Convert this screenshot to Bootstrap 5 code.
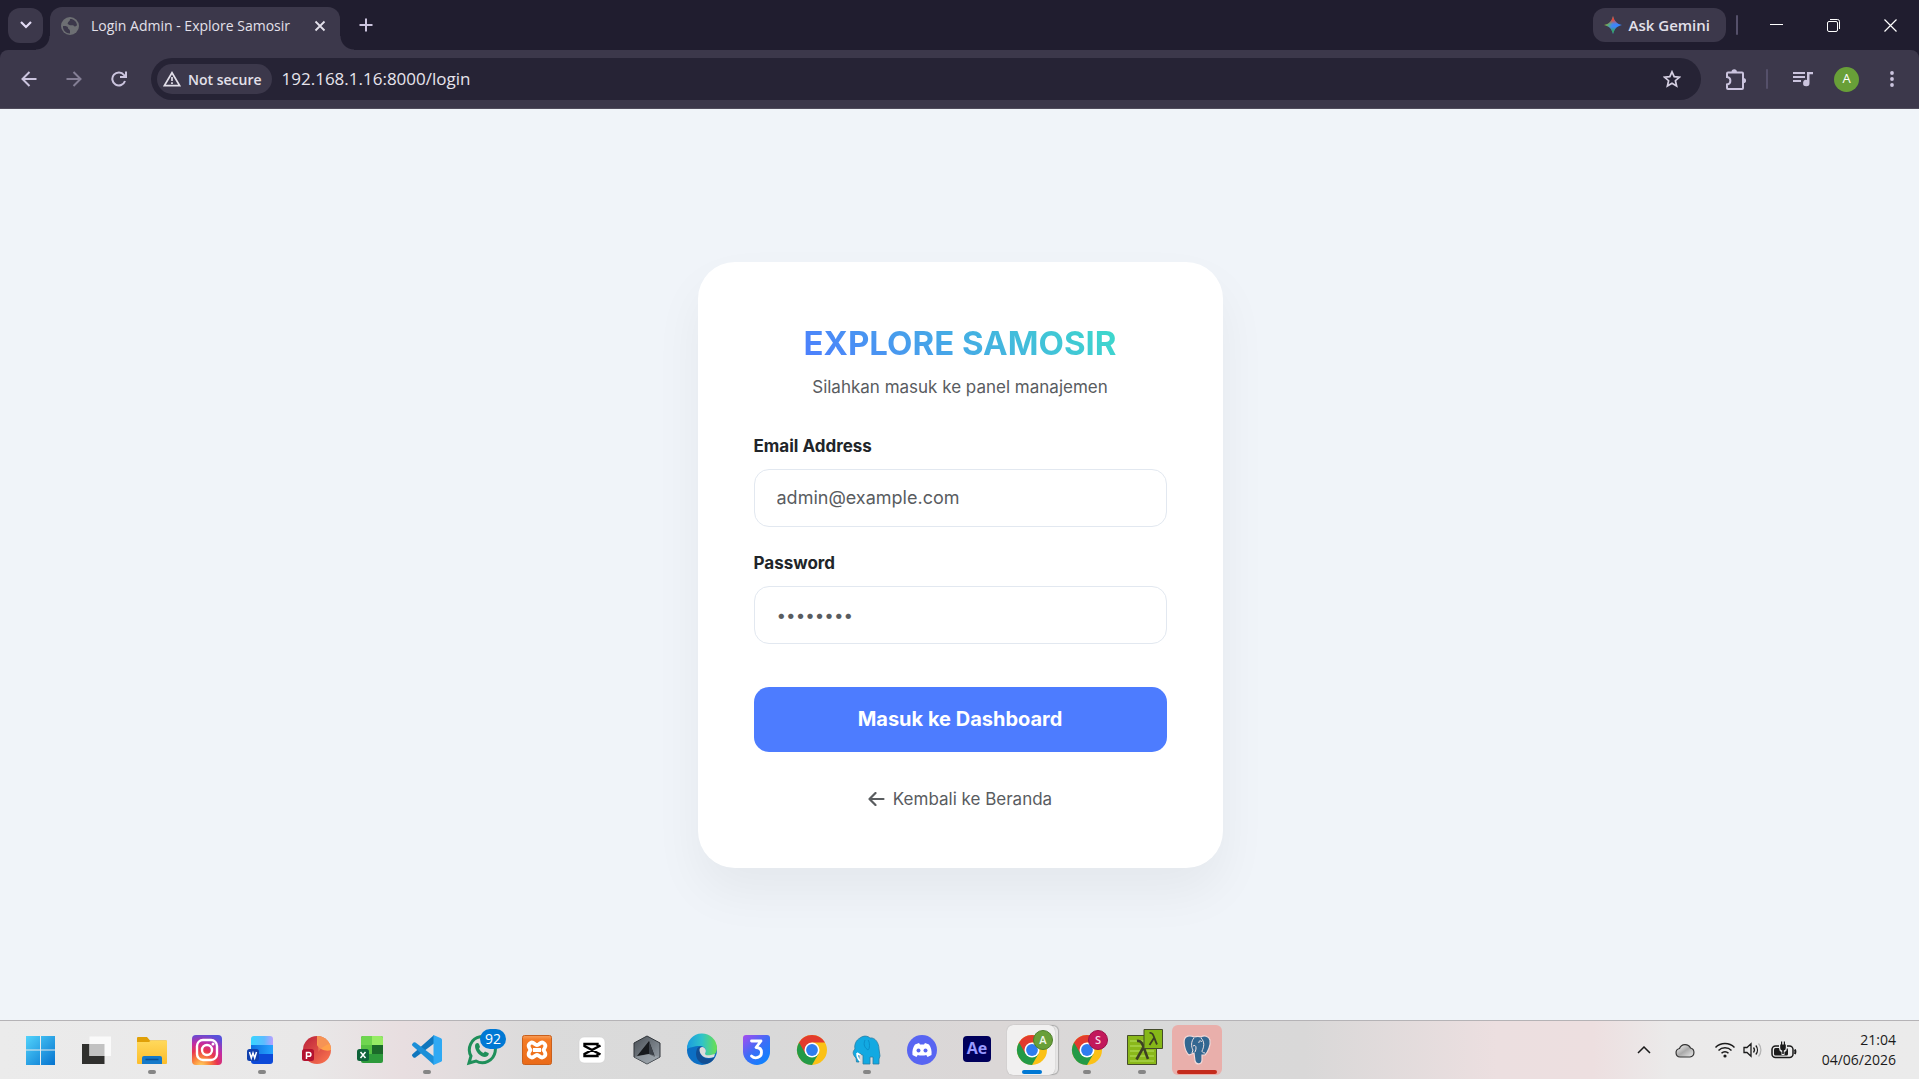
<!DOCTYPE html>
<html lang="id">
<head>
<meta charset="utf-8">
<meta name="viewport" content="width=device-width, initial-scale=1">
<title>Login Admin - Explore Samosir</title>
<link href="https://cdn.jsdelivr.net/npm/bootstrap@5.3.0/dist/css/bootstrap.min.css" rel="stylesheet">
<style>
  :root { --frame: #201d2f; --bar: #3c384b; --field: #262335; --ink: #cbc4de; --soft: #e3e0ea; }
  body { font-family: "Open Sans", "Noto Sans", sans-serif; background: #f0f4f9; }
  svg { display: block; flex: none; }
  .plain { border: 0; background: none; padding: 0; display: flex; align-items: center; justify-content: center; }

  /* window frame */
  .tab-strip { height: 50px; background: var(--frame); padding-left: 8px; }
  .tab-search { width: 35px; height: 35px; border-radius: 12px; background: var(--bar); }
  .site-tab { position: relative; width: 290px; height: 43px; margin-left: 7px; padding: 0 13px 6px 11px; background: var(--bar); border-radius: 12px 12px 0 0; color: var(--soft); font-size: 14px; }
  .site-tab::before, .site-tab::after { content: ""; position: absolute; bottom: 0; width: 14px; height: 14px; }
  .site-tab::before { right: 100%; background: radial-gradient(circle at 0 0, transparent 13px, var(--bar) 14px); }
  .site-tab::after { left: 100%; background: radial-gradient(circle at 100% 0, transparent 13px, var(--bar) 14px); }
  .new-tab { width: 35px; height: 35px; margin-left: 8px; }
  .gemini { height: 34px; padding: 0 16px 0 11px; gap: 7px; border-radius: 12px; background: var(--bar); color: var(--soft); font-size: 15px; font-weight: 600; }
  .rule { width: 2px; height: 20px; border-radius: 1px; background: #55506a; }
  .gemini + .rule { margin: 0 10px; }
  .win-btn { width: 57px; height: 50px; }

  .toolbar-wrap { background: var(--frame); }
  .toolbar { height: 59px; background: var(--bar); border-radius: 8px 8px 0 0; border-bottom: 1px solid #504c5c; padding: 0 5px 0 6px; }
  .tool { width: 45px; height: 42px; color: var(--ink); }
  .omnibox { height: 42px; margin: 0 12px 0 10px; padding: 0 20px 0 6px; border-radius: 21px; background: var(--field); }
  .chip { height: 30px; padding: 0 10px 0 6px; gap: 7px; border-radius: 15px; background: var(--bar); color: var(--soft); font-size: 14px; font-weight: 600; }
  .url { border: 0; outline: 0; background: none; color: #e6e4ec; font-size: 17px; margin-left: 10px; padding: 0; min-width: 0; }
  .avatar { width: 25px; height: 25px; border-radius: 50%; background: #689f38; color: #fff; font-size: 13px; margin: 0 10px 0 9px; }

  /* login page */
  main { padding-left: 1px; }
  .login-box { width: 100%; max-width: 525px; padding: 57px 56px 55px; background: #fff; border-radius: 37px; box-shadow: 0 25px 50px rgba(0, 0, 0, .05); font-family: Inter, "Open Sans", sans-serif; font-size: 17px; line-height: 30px; }
  .brand { width: max-content; margin: 0 auto 5px; font-size: 33px; line-height: 48px; font-weight: 700; background: linear-gradient(45deg, #4d7cff, #3ddcca); -webkit-background-clip: text; background-clip: text; color: transparent; }
  .hint { color: #595c5f; margin-bottom: 29px; }
  .field-label { display: block; font-weight: 700; color: #212529; margin-bottom: 8px; }
  .login-box .form-control { height: 58px; padding: 0 22px; border: 1px solid #e2e8f0; border-radius: 15px; font-size: 18px; }
  .login-box .form-control[type=password] { font-size: 17px; }
  .login-box .form-control::placeholder { color: #595c5f; }
  .field { margin-bottom: 21px; }
  .enter { height: 65px; margin-top: 43px; border: 0; border-radius: 15px; background: #4d7cff; font-size: 20px; font-weight: 700; }
  .home-link { height: 28px; margin-top: 33px; gap: 8px; color: #595c5f; text-decoration: none; }

  /* taskbar */
  .taskbar { height: 59px; border-top: 1px solid #b5b3b6; padding: 0 23px 0 27px; background: linear-gradient(90deg, #ebebeb 0, #e9e8e8 16%, #e8dee0 21%, #dbdbdb 28%, #d9d9d9 40%, #dbd7d7 52%, #d9d9d9 60%, #d9d8d8 68%, #ecdfe0 78%, #eddfe0 83%, #ebeaea 87%, #ebebeb 100%); }
  .apps { gap: 25px; }
  .app { position: relative; width: 30px; height: 30px; }
  .app > svg { position: relative; overflow: visible; }
  .running::after { content: ""; position: absolute; left: 11px; bottom: -9px; width: 8px; height: 4px; border-radius: 2px; background: #858585; }
  .current::before, .alert-app::before { content: ""; position: absolute; inset: -10px; border-radius: 6px; background: #f1f0f0; box-shadow: 0 0 1px #999; }
  .current::before { right: -8px; box-shadow: 0 0 1px #999, 4px 0 0 -1px #e6e5e5, 4px 0 1px #aaa; }
  .alert-app::before { background: #e9afab; box-shadow: none; }
  .current::after { left: 5px; width: 20px; background: #0078d4; }
  .alert-app::after { left: -5px; width: 40px; background: #c42b1c; }
  .count { position: absolute; left: 13px; top: -6px; width: 26px; height: 20px; border-radius: 10px; background: #0078d4; color: #fff; font-size: 14px; line-height: 20px; text-align: center; }
  .clock { font-size: 14px; line-height: 20px; color: #1b1b1b; margin-left: 25px; }
</style>
</head>
<body class="vh-100 d-flex flex-column overflow-hidden">

<header>
  <div class="tab-strip d-flex align-items-center">
    <button class="plain tab-search" aria-label="Cari tab"><svg width="12" height="8" viewBox="0 0 12 8" fill="none" stroke="#e3dcf5" stroke-width="2.2"><path d="M1 1l5 5 5-5"/></svg></button>
    <div class="site-tab d-flex align-items-center align-self-end">
      <svg width="18" height="18" viewBox="0 0 18 18"><circle cx="9" cy="9" r="9" fill="#6d6f73"/><path d="M2 9c2 0 5 0 5 2 0 1.500 2 1 2 3v2.500C5 16.500 1.500 13 2 9zM9 2c3-.5 6.500 2 7 6-1 2-3 1.500-3.500.5S10 9 8.500 8 6 7 7 5.500 9 4 9 2z" fill="#3c384b"/></svg>
      <span class="text-nowrap ms-2 ps-1 flex-grow-1">Login Admin - Explore Samosir</span>
      <button class="plain" aria-label="Tutup tab"><svg width="14" height="14" viewBox="0 0 14 14" stroke="#e3e0ea" stroke-width="1.800"><path d="M2.500 2.500l9 9m0-9l-9 9"/></svg></button>
    </div>
    <button class="plain new-tab" aria-label="Tab baru"><svg width="14" height="14" viewBox="0 0 14 14" stroke="#cbc4de" stroke-width="2"><path d="M7 .5v13M.5 7h13"/></svg></button>
    <div class="d-flex align-items-center ms-auto">
      <button class="plain gemini"><svg width="18" height="18" viewBox="0 0 18 18"><defs><linearGradient id="gm" x1="0" y1="0.200" x2="1" y2="0.700"><stop offset="0" stop-color="#fbbc04"/><stop offset=".28" stop-color="#5fae6a"/><stop offset=".5" stop-color="#4285f4"/><stop offset="1" stop-color="#3186ff"/></linearGradient><linearGradient id="gm2" x1="0" y1="0" x2="0" y2="1"><stop offset="0" stop-color="#ea4335"/><stop offset=".2" stop-color="#ea4335"/><stop offset=".45" stop-color="#ea4335" stop-opacity="0"/><stop offset=".6" stop-color="#34a853" stop-opacity="0"/><stop offset=".85" stop-color="#34a853"/></linearGradient></defs><path d="M9 0c1 5 4 8 9 9-5 1-8 4-9 9-1-5-4-8-9-9 5-1 8-4 9-9z" fill="url(#gm)"/><path d="M9 0c1 5 4 8 9 9-5 1-8 4-9 9-1-5-4-8-9-9 5-1 8-4 9-9z" fill="url(#gm2)"/></svg>Ask Gemini</button>
      <span class="rule"></span>
      <button class="plain win-btn" aria-label="Kecilkan"><svg width="13" height="13" viewBox="0 0 13 13" stroke="#fff"><path d="M0 5.500h13"/></svg></button>
      <button class="plain win-btn" aria-label="Pulihkan"><svg width="13" height="13" viewBox="0 0 13 13" fill="none" stroke="#fff"><rect x=".5" y="2.500" width="10" height="10" rx="1.500"/><path d="M3 .5h7.500a2 2 0 0 1 2 2V10"/></svg></button>
      <button class="plain win-btn" aria-label="Tutup"><svg width="13" height="13" viewBox="0 0 13 13" stroke="#fff" stroke-width="1.200"><path d="M.5.5l12 12m0-12l-12 12"/></svg></button>
    </div>
  </div>

  <div class="toolbar-wrap">
    <div class="toolbar d-flex align-items-center">
      <button class="plain tool" aria-label="Kembali"><svg width="16" height="16" viewBox="0 0 16 16" fill="none" stroke="currentColor" stroke-width="2"><path d="M15.500 8H1.500M8.500 1L1.500 8l7 7"/></svg></button>
      <button class="plain tool opacity-50" aria-label="Maju"><svg width="16" height="16" viewBox="0 0 16 16" fill="none" stroke="currentColor" stroke-width="2"><path d="M.5 8h14M7.500 1l7 7-7 7"/></svg></button>
      <button class="plain tool" aria-label="Muat ulang"><svg width="16" height="16" viewBox="0 0 16 16" fill="none" stroke="currentColor" stroke-width="2"><path d="M14 10A6.500 6.500 0 1 1 13 4l1.500 2M15 .5V6H9"/></svg></button>
      <div class="omnibox d-flex align-items-center flex-grow-1">
        <button class="plain chip"><svg width="18" height="16" viewBox="0 0 18 16" fill="none" stroke="currentColor" stroke-width="1.700"><path d="M9 1.700L16.600 14.600H1.400z"/><path d="M9 6v4M9 11.200v1.800"/></svg>Not secure</button>
        <input class="url flex-grow-1" type="text" value="192.168.1.16:8000/login" aria-label="Alamat">
        <button class="plain" aria-label="Tandai halaman"><svg width="18" height="18" viewBox="0 0 18 18" fill="none" stroke="#d5cfe2" stroke-width="1.700"><path d="M9 1.800l2.200 4.900 5.200.5-4 3.500 1.200 5.300L9 13.200 4.400 16l1.200-5.300-4-3.500 5.200-.5z"/></svg></button>
      </div>
      <button class="plain tool" aria-label="Ekstensi"><svg width="21" height="21" viewBox="0 0 21 21"><path d="M3 3.500h14q1 0 1 1V19q0 1-1 1H3q-1 0-1-1v-3.500c4.500-.5 4.500-7 0-7.500V4.500q0-1 1-1z" fill="none" stroke="currentColor" stroke-width="2"/><path d="M6.500 3a2.700 2.700 0 0 1 5.400 0zM18.500 9a2.600 2.600 0 0 1 0 5.200z" fill="currentColor"/></svg></button>
      <span class="rule ms-2 me-2"></span>
      <button class="plain tool ms-1" aria-label="Kontrol media"><svg width="20" height="16" viewBox="0 0 20 16"><path d="M0 2h12M0 6h12M0 10h8" stroke="currentColor" stroke-width="2"/><path d="M14 1h6v2.200h-3.500V12A3.200 3.200 0 1 1 14 9z" fill="currentColor"/></svg></button>
      <button class="plain avatar" aria-label="Profil">A</button>
      <button class="plain tool" aria-label="Menu"><svg width="4" height="16" viewBox="0 0 4 16" fill="currentColor"><circle cx="2" cy="2" r="1.900"/><circle cx="2" cy="8" r="1.900"/><circle cx="2" cy="14" r="1.900"/></svg></button>
    </div>
  </div>
</header>

<main class="flex-grow-1 d-flex align-items-center justify-content-center">
  <form class="login-box" onsubmit="return false">
    <h1 class="brand">EXPLORE SAMOSIR</h1>
    <p class="hint text-center">Silahkan masuk ke panel manajemen</p>
    <div class="field">
      <label class="field-label" for="email">Email Address</label>
      <input class="form-control" id="email" type="email" placeholder="admin@example.com">
    </div>
    <div>
      <label class="field-label" for="password">Password</label>
      <input class="form-control" id="password" type="password" placeholder="••••••••">
    </div>
    <button class="btn btn-primary enter w-100" type="submit">Masuk ke Dashboard</button>
    <a class="home-link d-flex align-items-center justify-content-center" href="#"><svg width="17" height="14" viewBox="0 0 17 14" fill="none" stroke="currentColor" stroke-width="2.200" stroke-linecap="round" stroke-linejoin="round"><path d="M15.500 7H1.500M7.500 1L1.500 7l6 6"/></svg>Kembali ke Beranda</a>
  </form>
</main>

<footer class="taskbar d-flex align-items-center">
  <svg width="0" height="0" class="position-absolute"><defs>
    <linearGradient id="win" x1="0" y1="0" x2="1" y2="1"><stop offset="0" stop-color="#52d3fb"/><stop offset="1" stop-color="#0573cf"/></linearGradient>
    <linearGradient id="fold" x1="0" y1="0" x2="0" y2="1"><stop offset="0" stop-color="#ffd95c"/><stop offset="1" stop-color="#fcbd2b"/></linearGradient>
    <radialGradient id="insta" cx=".3" cy="1.050" r="1.100"><stop offset="0" stop-color="#ffd766"/><stop offset=".25" stop-color="#fb8b3c"/><stop offset=".5" stop-color="#e8344f"/><stop offset=".72" stop-color="#c32ba3"/><stop offset="1" stop-color="#5851db"/></radialGradient>
    <linearGradient id="wtop"><stop offset="0" stop-color="#36d5ff"/><stop offset=".6" stop-color="#5dbcff"/><stop offset="1" stop-color="#b9a1ff"/></linearGradient>
    <linearGradient id="wmid"><stop offset="0" stop-color="#0d6fe0"/><stop offset="1" stop-color="#27a4ff"/></linearGradient>
    <linearGradient id="ppt" x1="0" y1="0" x2="1" y2="1"><stop offset="0" stop-color="#b91f3a"/><stop offset="1" stop-color="#ff7a50"/></linearGradient>
    <linearGradient id="three" x1="0" y1="0" x2=".8" y2="1"><stop offset="0" stop-color="#a84cf0"/><stop offset=".5" stop-color="#3f6cf6"/><stop offset="1" stop-color="#0a84ff"/></linearGradient>
    <linearGradient id="edgeTop"><stop offset="0" stop-color="#1a9be0"/><stop offset=".5" stop-color="#2fc3c9"/><stop offset="1" stop-color="#6be04f"/></linearGradient>
    <linearGradient id="xam" x1="0" y1="0" x2="0" y2="1"><stop offset="0" stop-color="#f9a05c"/><stop offset=".15" stop-color="#f47b26"/><stop offset="1" stop-color="#ea6a18"/></linearGradient>
    <linearGradient id="hex" x1="0" y1="0" x2="1" y2="1"><stop offset="0" stop-color="#4a5056"/><stop offset="1" stop-color="#99a2aa"/></linearGradient>
    <linearGradient id="cl" x1="0" y1="0" x2="1" y2="1"><stop offset="0" stop-color="#fff"/><stop offset=".5" stop-color="#aaa"/><stop offset="1" stop-color="#eee"/></linearGradient>
    <g id="chrome"><circle cx="15" cy="15" r="15" fill="#fbc116"/><path d="M15 15L2 7.500A15 15 0 0 0 15 30l6.500-11.200z" fill="#239a47"/><path d="M2 7.500A15 15 0 0 1 28 7.500H15L8.500 18.700z" fill="#e33b2e"/><circle cx="15" cy="15" r="7.500" fill="#fff"/><circle cx="15" cy="15" r="5.900" fill="#2f7def"/></g>
  </defs></svg>

  <nav class="apps d-flex align-items-center" aria-label="Aplikasi">
    <button class="plain app" aria-label="Mulai"><svg width="30" height="30" viewBox="1 0 30 30" fill="url(#win)"><path d="M0 1h14v13.500H0zM15 1h14v13.500H15zM0 15.500h14V30H0zM15 15.500h14V30H15z"/></svg></button>
    <button class="plain app" aria-label="Tampilan tugas"><svg width="30" height="30" viewBox="0 0 30 30"><path d="M0 9h22.500v20H0z" fill="#30302e"/><path d="M7.500 1.500H29V21H7.500z" fill="#fafafa"/><path d="M7.500 9h15v12h-15z" fill="#c2c2c2"/></svg></button>
    <button class="plain app running" aria-label="File Explorer"><svg width="30" height="30" viewBox="0 0 30 30"><path d="M0 3q0-1 1-1h9l3 3.500H29q1 0 1 1V12H0z" fill="#e0a008"/><path d="M0 7h12l2-1.500h15q1 0 1 1V28q0 1-1 1H1q-1 0-1-1z" fill="url(#fold)"/><path d="M5 29v-6q0-2 2-2h16q2 0 2 2v6z" fill="#1579c9"/><path d="M8.500 24.500h13" stroke="#0b4f92" stroke-width="1.500"/></svg></button>
    <button class="plain app" aria-label="Instagram"><svg width="30" height="30" viewBox="0 0 30 30" fill="none" stroke="#fff" stroke-width="2.400"><rect width="30" height="30" rx="4" fill="url(#insta)" stroke="none"/><rect x="5" y="5" width="20" height="20" rx="6"/><circle cx="15" cy="15" r="5"/><circle cx="21" cy="9" r="1.500" fill="#fff" stroke="none"/></svg></button>
    <button class="plain app running" aria-label="Word"><svg width="30" height="30" viewBox="0 0 30 30"><rect x="4" y="1" width="22" height="14" rx="3" fill="url(#wtop)"/><path d="M4 10h22v12H4z" fill="url(#wmid)"/><path d="M4 19h22v7q0 3-3 3H7q-3 0-3-3z" fill="#0c49d8"/><rect y="14" width="12" height="12" rx="2.500" fill="#1040ad"/><path d="M2.500 17l1.800 6L6 18l1.700 5 1.800-6" fill="none" stroke="#fff" stroke-width="1.500"/></svg></button>
    <button class="plain app" aria-label="PowerPoint"><svg width="30" height="30" viewBox="0 0 30 30"><circle cx="15" cy="15" r="14" fill="url(#ppt)"/><path d="M15 1a14 14 0 0 1 14 14c-5 2-12-1-14-5z" fill="#ffa14b"/><path d="M15 1c5 0 10 3 12.500 8-4 1-9 4-11 8z" fill="#f08a5b" opacity=".6"/><rect y="14" width="12" height="12" rx="2.500" fill="#b3122f"/><path d="M4.500 24v-6.500H7a1.900 1.900 0 0 1 0 3.800H4.500" fill="none" stroke="#fff" stroke-width="1.500"/></svg></button>
    <button class="plain app" aria-label="Excel"><svg width="30" height="30" viewBox="0 0 30 30"><rect x="4" y="1" width="22" height="27" rx="2" fill="#2d9a3b"/><path d="M6 1h9v9H4V3q0-2 2-2z" fill="#6fd650"/><path d="M15 1h9q2 0 2 2v7H15z" fill="#97ec65"/><path d="M15 10h11v9H15z" fill="#1b6a2a"/><path d="M4 10h11v9H4z" fill="#57c243"/><rect y="14" width="12" height="12" rx="2.500" fill="#0e6239"/><path d="M3.500 17l5 6m0-6l-5 6" stroke="#fff" stroke-width="1.500"/></svg></button>
    <button class="plain app running" aria-label="Visual Studio Code"><svg width="30" height="30" viewBox="0 0 30 30"><path d="M22 0v8.500L3.500 22.500q-1 .7-2 0L.4 21.300q-1-1 0-2z" fill="#0f76bd"/><path d="M22 30v-8.500L3.500 7.500q-1-.7-2 0L.4 8.700q-1 1 0 2z" fill="#1b8fd8"/><path d="M21.500 0L29 3.300q1 .5 1 1.500v20.400q0 1-1 1.500L21.500 30z" fill="#2fa9f4"/></svg></button>
    <button class="plain app" aria-label="WhatsApp"><svg width="30" height="30" viewBox="0 0 30 30"><path d="M2 28l2-7A13 13 0 1 1 9 26z" fill="none" stroke="#1f8f5a" stroke-width="3"/><path d="M8 11c0-3 3-4 4-2l1 3-1 1.500c1 2 2.500 3.500 4.500 4.500l1.500-1.500 3.500 1.500c1 1-1 4-3.500 4C13 22 8 16 8 11z" fill="#1f8f5a"/></svg><span class="count">92</span></button>
    <button class="plain app" aria-label="XAMPP"><svg width="30" height="30" viewBox="0 0 30 30"><rect x=".5" y=".5" width="29" height="29" rx="2" fill="url(#xam)" stroke="#c9601d"/><path d="M8.500 8c3-2 4 2 6.500 2s3.500-4 6.500-2 2 4 0 7c2 3 3 5 0 7s-4-2-6.500-2-3.500 4-6.500 2-2-4 0-7c-2-3-3-5 0-7zM11 15h8" fill="none" stroke="#fff" stroke-width="3.800" stroke-linejoin="round"/></svg></button>
    <button class="plain app" aria-label="CapCut"><svg width="30" height="30" viewBox="0 0 30 30"><rect x="2" y="2" width="26" height="26" rx="5" fill="#fff" stroke="#d0d0d0" stroke-width=".6"/><path d="M23.500 10.500L7.500 19v2h13v-2M23.500 19.500L7.500 11V9h13v2" fill="none" stroke="#000" stroke-width="2.400"/></svg></button>
    <button class="plain app" aria-label="Editor 3D"><svg width="30" height="30" viewBox="0 0 30 30"><path d="M15 1l13 7v14l-13 7-13-7V8z" fill="url(#hex)" stroke="#30353a"/><path d="M17 6l6 16-6-3-12 2z" fill="#171a1d"/><path d="M17 6l6 16-6-3z" fill="#3b4148"/><path d="M2 22l15-3 11 3-13 7z" fill="#a9b1b8" opacity=".5"/></svg></button>
    <button class="plain app" aria-label="Edge"><svg width="30" height="30" viewBox="0 0 30 30"><circle cx="15" cy="15" r="15" fill="#0c6fc4"/><path d="M0 14A15 15 0 0 1 30 13c0 6-4 8-8 8-3 0-5-1-4-3 2-3 0-7-5-7C7 11 2 13 0 14z" fill="url(#edgeTop)"/><path d="M10 14c-3 7 1 15 9 15 4-1 7-3 9-7-8 4-15 0-15-6 0-2 1-3 2-4-2-1-4 0-5 2z" fill="#124f94"/><path d="M12.500 15c0-3 3-4 5-2s1.500 4 .5 5.500c0 2 3 2.500 10 .500l-1 3c-8 3-14-1-14.500-7z" fill="#dcdcdc"/></svg></button>
    <button class="plain app" aria-label="Aplikasi 3"><svg width="30" height="30" viewBox="0 0 30 30"><path d="M4 0h21q3 0 3 3v14c0 7-6 13-13 13S1 24 1 17V3q0-3 3-3z" fill="url(#three)"/><path d="M9.500 6h9.500l-5 6.500c4 0 5.500 2 5.500 5 0 5-6.500 7-10 3.500" fill="none" stroke="#fff" stroke-width="2.800" stroke-linejoin="round" stroke-linecap="round"/></svg></button>
    <button class="plain app" aria-label="Chrome"><svg width="30" height="30" viewBox="0 0 30 30"><use href="#chrome"/></svg></button>
    <button class="plain app running" aria-label="Laragon"><svg width="30" height="30" viewBox="0 0 30 30"><path d="M8 3c4-3 8-2 10 0 5-1 9 5 9 11l1 7-1 3v5h-6v-7h-3v7h-7V20c-2 0-2-1-3-2l-1 3v6H4.500L4 23C1 20 0 17 3 14 2 10 4 5 8 3z" fill="#12a9e2" stroke="#2a7fa5" stroke-width=".8"/><path d="M13 5c-2 5 0 8 3 10 2-1 2-8 0-10" fill="none" stroke="#0b8fc9"/><path d="M5 18c0 4 1 6 3 8M5 18l3 2" stroke="#fff" stroke-width="1.600" fill="none"/></svg></button>
    <button class="plain app" aria-label="Discord"><svg width="30" height="30" viewBox="0 0 30 30"><circle cx="15" cy="15" r="15" fill="#5865f2"/><path d="M8 9.500l4-1.500 1 1.500h4L18 8l4 1.500c2 3 3 6 2.500 10.500l-4 2-1.200-2c-2.500.8-6 .8-8.600 0l-1.200 2-4-2C5 15.500 6 12.500 8 9.500z" fill="#fff"/><circle cx="11.500" cy="15.500" r="2" fill="#5865f2"/><circle cx="18.500" cy="15.500" r="2" fill="#5865f2"/></svg></button>
    <button class="plain app" aria-label="After Effects"><svg width="30" height="30" viewBox="0 0 30 30"><rect x="1" y="1" width="28" height="26" rx="4" fill="#00005b"/><text x="15" y="19" text-anchor="middle" font-family="Open Sans" font-size="16" font-weight="700" fill="#9999ff">Ae</text></svg></button>
    <button class="plain app running current" aria-label="Chrome A"><svg width="30" height="30" viewBox="0 0 30 30"><use href="#chrome"/><circle cx="26" cy="5" r="9.500" fill="#689f38" stroke="#4d7f2c"/><text x="26" y="9" text-anchor="middle" font-family="Open Sans" font-size="11" font-weight="600" fill="#f0f6ea">A</text></svg></button>
    <button class="plain app running" aria-label="Chrome S"><svg width="30" height="30" viewBox="0 0 30 30"><use href="#chrome"/><circle cx="26" cy="5" r="9.500" fill="#c2185b" stroke="#9b1148"/><text x="26" y="9" text-anchor="middle" font-family="Open Sans" font-size="11" font-weight="600" fill="#f7dbe6">S</text></svg></button>
    <button class="plain app running" aria-label="Terminal lambda"><svg width="30" height="30" viewBox="0 0 30 30"><path d="M.5.500h29v29H.5z" fill="#8ab81a" stroke="#444c2a"/><path d="M3 6h24M3 11h24M3 16h24M3 21h24M3 26h24" stroke="#a8d24a" stroke-width="1.500"/><path d="M10 6c6-1 6 6 11 18M16 13L9.500 24.500" fill="none" stroke="#3d4023" stroke-width="2.600"/><path d="M17-5.500h18.500v19H17z" fill="#86b818" stroke="#444c2a"/><path d="M22.500-2c4-1 4 4 7.500 11.500M27 3l-4.500 7" fill="none" stroke="#3d4023" stroke-width="1.800"/></svg></button>
    <button class="plain app running alert-app" aria-label="pgAdmin PostgreSQL"><svg width="30" height="30" viewBox="0 0 30 30"><path d="M4 2c3-2 6-1 8 0 3-1 5-1 7 0 3-2 8-1 9 3 1 5-2 12-5 15h-3v5c0 5-6 5-7 1l-1-8-5 2C3 17 0 5 4 2z" fill="#336791" stroke="#f3d9d8" stroke-width="1.200"/><path d="M12 3c-3 3-3 9-1 12l-1 3M19 3c4 4 3 9 1 13 0 1 1 2 3 2M11 11c3-2 4 2 2 6M17 8c-1-2 2-3 3-1" fill="none" stroke="#f3e4e4" stroke-width="1"/></svg></button>
  </nav>

  <div class="d-flex align-items-center ms-auto">
    <button class="plain" aria-label="Ikon tersembunyi"><svg width="14" height="8" viewBox="0 0 14 8" fill="none" stroke="#1b1b1b" stroke-width="1.500"><path d="M1 7l6-6 6 6"/></svg></button>
    <button class="plain ms-4" aria-label="OneDrive"><svg width="20" height="15" viewBox="0 0 20 15"><path d="M5 14a4.300 4.300 0 0 1-.5-8.500 6 6 0 0 1 11-.5A4.600 4.600 0 0 1 15 14z" fill="url(#cl)" stroke="#333" stroke-width="1.200"/></svg></button>
    <button class="plain" aria-label="Jaringan, suara dan baterai"><svg class="ms-3 me-2" width="24" height="16" viewBox="-4 0 24 16" fill="none" stroke="#1b1b1b" stroke-width="1.500"><path d="M.5 5.500a13.500 13.500 0 0 1 19 0M3.500 8.500a9.200 9.200 0 0 1 13 0M6.500 11.300a5 5 0 0 1 7 0"/><circle cx="10" cy="14" r="1.600" fill="#1b1b1b" stroke="none"/></svg><svg width="20" height="16" viewBox="0 0 20 16" fill="none" stroke="#1b1b1b" stroke-width="1.300"><path d="M1 5.500h3l4-3.800v12.600l-4-3.800H1zM10.500 5.500a4 4 0 0 1 0 5M12.800 3.500a7 7 0 0 1 0 9"/><path d="M15.500 1.500a10 10 0 0 1 0 13" stroke="#b5b5b5"/></svg><svg class="ms-2" width="26" height="18" viewBox="0 0 26 18" fill="none" stroke="#1b1b1b" stroke-width="1.500"><rect x="1" y="5" width="21" height="11.500" rx="3.500"/><path d="M23.800 8.500q1.200 2.200 0 4.500" stroke-width="2"/><rect x="3" y="7" width="14" height="7.500" rx="1.500" fill="#1b1b1b" stroke="none"/><path d="M8 2h8v5q0 3-2.500 4v3h-3v-3Q8 10 8 7z" fill="#ebebeb" stroke="none"/><path d="M9.200 3.500h5.600V7q0 2-2 2.500V13h-1.600V9.500q-2-.5-2-2.500zM10 .5h1.200V4H10zM12.800.5H14V4h-1.200z" fill="#1b1b1b" stroke="none"/></svg></button>
    <div class="clock text-end"><div>21:04</div><div>04/06/2026</div></div>
  </div>
</footer>

<script src="https://cdn.jsdelivr.net/npm/bootstrap@5.3.0/dist/js/bootstrap.bundle.min.js"></script>
</body>
</html>
